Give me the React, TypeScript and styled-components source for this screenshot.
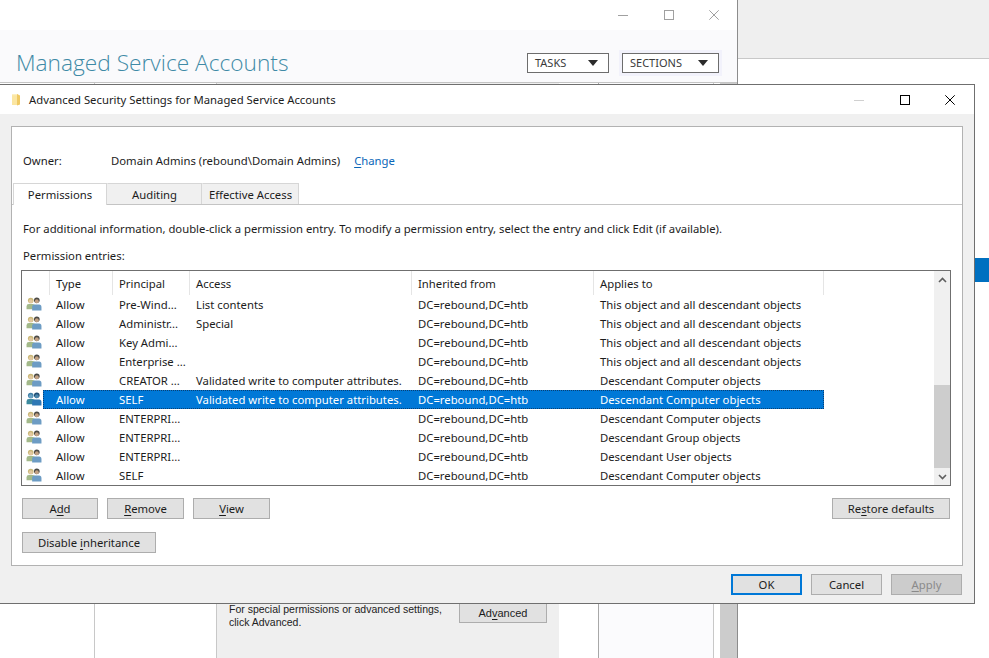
import React from 'react';
import styled, { createGlobalStyle } from 'styled-components';

const UI_FONT = '"Noto Sans", "Open Sans", "Liberation Sans", sans-serif';

const GlobalStyle = createGlobalStyle`
  html, body {
    margin: 0;
    padding: 0;
    background: #ffffff;
  }
  body {
    font-family: ${UI_FONT};
    font-size: 11.3px;
    color: #1c1c1c;
  }
`;

const Desktop = styled.div`
  position: relative;
  width: 989px;
  height: 658px;
  overflow: hidden;
  background: #ffffff;
`;

/* window behind the dialog */
const BackWindow = styled.div`
  position: absolute;
  left: 0;
  top: 0;
  width: 737px;
  height: 658px;
  display: flex;
  flex-direction: column;
  border-right: 1px solid #8c8c8c;
  background: #ffffff;
`;

const BackTitleBar = styled.div`
  height: 30px;
  flex: none;
  box-sizing: border-box;
  padding-bottom: 1px;
  display: flex;
  align-items: center;
  justify-content: flex-end;
`;

const CaptionButton = styled.div`
  width: 45.5px;
  height: 29px;
  display: flex;
  align-items: center;
  justify-content: center;
`;

const BackCaptions = styled.div`
  display: flex;
`;

const BackHeader = styled.div`
  height: 53px;
  flex: none;
  box-sizing: border-box;
  display: flex;
  align-items: center;
  padding: 13px 18px 0 16px;
  background: #fafafc;
  border-bottom: 1px solid #c4c4c4;
`;

const PageTitle = styled.h1`
  margin: 0;
  flex: 1;
  font-family: "Open Sans", sans-serif;
  font-weight: 300;
  font-size: 22.7px;
  color: #3f8aa6;
`;

const MenuButton = styled.div<{ $width: number; $halo?: boolean }>`
  width: ${(p) => p.$width}px;
  height: 20px;
  box-sizing: border-box;
  margin-left: 13px;
  display: flex;
  align-items: center;
  justify-content: space-between;
  padding: 0 10px 0 7px;
  border: 1px solid #6d6d6d;
  background: #ffffff;
  font-size: 11px;
  color: #3a3a3a;
  box-shadow: ${(p) => (p.$halo ? '0 0 0 3px #f2f2fb' : 'none')};
`;

const MenuCaret = styled.span`
  width: 0;
  height: 0;
  border-left: 5px solid transparent;
  border-right: 5px solid transparent;
  border-top: 6px solid #2b2b2b;
`;

const BackColumns = styled.div`
  flex: 1;
  display: flex;
`;

const BackColumn = styled.div<{ $width: number; $tint?: boolean }>`
  width: ${(p) => p.$width}px;
  box-sizing: border-box;
  flex: none;
  background: ${(p) => (p.$tint ? '#fbfbfd' : '#ffffff')};
  border-right: 1px solid #c8c8c8;
`;

const BackGap = styled.div<{ $width: number }>`
  width: ${(p) => p.$width}px;
  flex: none;
`;

const GreyPanel = styled.div`
  width: 342px;
  flex: none;
  box-sizing: border-box;
  display: flex;
  align-items: flex-end;
  padding: 0 0 30px 12px;
  background: #efefef;
`;

const PanelNote = styled.div`
  width: 230px;
  flex: none;
  margin-bottom: -1px;
  font-family: "Liberation Sans", Arial, sans-serif;
  font-size: 10.5px;
  line-height: 13px;
  color: #222222;
`;

const BackColumnLeft = styled(BackColumn)`
  border-left: 1px solid #a8a8a8;
`;

const BackScroll = styled.div`
  width: 17px;
  flex: none;
  background: #cccccc;
`;

/* window on the right, mostly cut off */
const SideWindow = styled.div`
  position: absolute;
  left: 738px;
  top: 0;
  right: 0;
  bottom: 0;
`;

const SideBar = styled.div`
  height: 59px;
  box-sizing: border-box;
  background: #efefef;
  border-bottom: 1px solid #c8c8c8;
`;

const SideMarker = styled.div`
  position: absolute;
  left: 236px;
  top: 258px;
  right: 0;
  height: 24px;
  background: #0070c0;
`;

/* the dialog */
const Dialog = styled.div`
  position: absolute;
  left: -1px;
  top: 84px;
  width: 976px;
  height: 520px;
  box-sizing: border-box;
  display: flex;
  flex-direction: column;
  border: 1px solid #6f6f6f;
  background: #f0f0f0;
`;

const DialogTitleBar = styled.div`
  height: 29px;
  flex: none;
  display: flex;
  align-items: center;
  padding: 0 1px 0 11px;
  background: #ffffff;
`;

const DialogTitle = styled.span`
  flex: 1;
  margin-left: 8px;
  color: #1c1c1c;
`;

const DialogBody = styled.div`
  flex: 1;
  display: flex;
  flex-direction: column;
  padding: 12px 11px 8px 11px;
  min-height: 0;
`;

const MainPanel = styled.div`
  height: 440px;
  flex: none;
  box-sizing: border-box;
  display: flex;
  flex-direction: column;
  background: #ffffff;
  border: 1px solid #b2b2b2;
`;

const OwnerRow = styled.div`
  height: 56px;
  flex: none;
  box-sizing: border-box;
  display: flex;
  align-items: center;
  padding: 10px 0 0 11px;
`;

const OwnerLabel = styled.span`
  width: 88px;
`;

const OwnerValue = styled.span`
  margin-right: 14px;
`;

const ChangeLink = styled.a`
  color: #0a66b8;
  text-decoration: none;
`;

const Key = styled.span`
  text-decoration: underline;
  text-underline-offset: 2px;
`;

const TabStrip = styled.div`
  height: 22px;
  flex: none;
  box-sizing: border-box;
  display: flex;
  align-items: flex-end;
  border-bottom: 1px solid #c4c4c4;
  padding-left: 1px;
`;

const Tab = styled.div<{ $width: number; $active?: boolean }>`
  width: ${(p) => p.$width}px;
  height: ${(p) => (p.$active ? 22 : 21)}px;
  box-sizing: border-box;
  display: flex;
  align-items: center;
  justify-content: center;
  border: 1px solid #d6d6d6;
  border-bottom: none;
  border-left-color: ${(p) => (p.$active ? '#d6d6d6' : 'transparent')};
  background: ${(p) => (p.$active ? '#ffffff' : '#f0f0f0')};
  margin-bottom: ${(p) => (p.$active ? -1 : 0)}px;
  position: relative;
`;

const TabBody = styled.div`
  flex: 1;
  display: flex;
  flex-direction: column;
  padding: 0 12px 11px 10px;
  min-height: 0;
`;

const InfoLine = styled.div`
  margin-top: 15px;
  padding-left: 1px;
  height: 17px;
  line-height: 17px;
`;

const EntriesLabel = styled.div`
  margin-top: 10px;
  padding-left: 1px;
  height: 17px;
  line-height: 17px;
`;

const EntriesBox = styled.div`
  margin: 6px 0 0 -1px;
  height: 216px;
  width: 930px;
  flex: none;
  box-sizing: border-box;
  display: flex;
  border: 1px solid #6f6f6f;
  background: #ffffff;
`;

const EntriesList = styled.div`
  flex: 1;
  min-width: 0;
  overflow: hidden;
`;

const HeaderRow = styled.div`
  height: 24px;
  display: grid;
  grid-template-columns: 28px 63px 77px 222px 182px 230px;
`;

const HeaderCell = styled.div`
  box-sizing: border-box;
  display: flex;
  align-items: center;
  padding-left: 6px;
  border-right: 1px solid #e5e5e5;
`;

const Row = styled.div`
  height: 19px;
  display: flex;
  align-items: center;
`;

const RowIcon = styled.div`
  width: 21px;
  flex: none;
  display: flex;
  padding: 0 0 2px 4px;
  box-sizing: border-box;
`;

const RowBody = styled.div<{ $selected?: boolean }>`
  width: 781px;
  height: 19px;
  flex: none;
  display: grid;
  grid-template-columns: 70px 77px 222px 182px 230px;
  align-items: center;
  box-sizing: border-box;
  background: ${(p) => (p.$selected ? '#0078d7' : 'transparent')};
  color: ${(p) => (p.$selected ? '#ffffff' : 'inherit')};
  outline: ${(p) => (p.$selected ? '1px dotted #0a3f72' : 'none')};
  outline-offset: -1px;
`;

const RowCell = styled.div`
  padding-left: 6px;
  white-space: nowrap;
  &:first-child {
    padding-left: 13px;
  }
`;

const ScrollTrack = styled.div`
  width: 16px;
  flex: none;
  display: flex;
  flex-direction: column;
  background: #f0f0f0;
`;

const ScrollArrow = styled.div`
  height: 17px;
  flex: none;
  display: flex;
  align-items: center;
  justify-content: center;
`;

const ScrollSpace = styled.div`
  flex: 1;
  display: flex;
  flex-direction: column;
  justify-content: flex-end;
`;

const ScrollThumb = styled.div`
  height: 83px;
  background: #cdcdcd;
`;

const ActionRow = styled.div<{ $top: number }>`
  display: flex;
  margin-top: ${(p) => p.$top}px;
  gap: 9px;
  width: 928px;
`;

const Spacer = styled.div`
  flex: 1;
`;

const Button = styled.div<{ $width: number; $variant?: 'default' | 'disabled' }>`
  width: ${(p) => p.$width}px;
  height: 21px;
  flex: none;
  box-sizing: border-box;
  display: flex;
  align-items: center;
  justify-content: center;
  white-space: pre;
  border: ${(p) => (p.$variant === 'default' ? '2px solid #0078d7' : '1px solid #adadad')};
  background: ${(p) => (p.$variant === 'disabled' ? '#cccccc' : '#e1e1e1')};
  color: ${(p) => (p.$variant === 'disabled' ? '#8a8a8a' : '#1c1c1c')};
`;

const BackButton = styled(Button)`
  font-family: "Liberation Sans", Arial, sans-serif;
  font-size: 11px;
  margin-bottom: 5px;
`;

const DialogFooter = styled.div`
  display: flex;
  justify-content: flex-end;
  gap: 9px;
  padding-top: 8px;
  padding-right: 1px;
`;

function WindowGlyph ({ kind, color }: { kind: 'min' | 'max' | 'close'; color: string }): React.ReactElement {
  return (
    <svg width='10' height='10' viewBox='0 0 10 10' fill='none' stroke={color} strokeWidth='1'>
      {kind === 'min' && <path d='M0 5.5H10' />}
      {kind === 'max' && <rect x='0.5' y='0.5' width='9' height='9' />}
      {kind === 'close' && <path d='M0.3 0.3L9.7 9.7M9.7 0.3L0.3 9.7' />}
    </svg>
  );
}

function FolderIcon (): React.ReactElement {
  return (
    <svg width='10' height='13' viewBox='0 0 10 13'>
      <path d='M1 1h5l2 1.5V12H1z' fill='#fbe6a2' />
      <path d='M6 1l3 1.5V11.5L6 12.5z' fill='#efc964' />
      <path d='M1 1h5v1.2H1z' fill='#fdf0c4' />
    </svg>
  );
}

function UsersIcon ({ selected }: { selected?: boolean }): React.ReactElement {
  const hairLeft = selected ? '#3f7fa6' : '#c9b878';
  const faceLeft = selected ? '#6ba3c4' : '#e3c9a0';
  const bodyLeft = selected ? '#3c8a9e' : '#a3b98a';
  const hairRight = selected ? '#1f4d73' : '#4b4a46';
  const faceRight = selected ? '#4a86ad' : '#c2a183';
  const bodyRight = selected ? '#2f78b4' : '#6d9cc4';

  return (
    <svg width='16' height='14' viewBox='0 0 17 15'>
      <circle cx='5' cy='3.8' r='3' fill={hairLeft} />
      <circle cx='5' cy='4.5' r='2.1' fill={faceLeft} />
      <path d='M0.5 13V10.2Q0.5 7.6 3 7.6H7Q9.5 7.6 9.5 10.2V13z' fill={bodyLeft} />
      <circle cx='11.5' cy='3.6' r='3' fill={hairRight} />
      <circle cx='11.5' cy='4.6' r='2.1' fill={faceRight} />
      <path d='M6.5 14.5V10.8Q6.5 8 9 8H14Q16.5 8 16.5 10.8V14.5z' fill={bodyRight} />
    </svg>
  );
}

function ScrollChevron ({ down }: { down?: boolean }): React.ReactElement {
  return (
    <svg width='9' height='6' viewBox='0 0 9 6' fill='none' stroke='#5f5f5f' strokeWidth='1.6'>
      <path d={down ? 'M1 1l3.5 3.5L8 1' : 'M1 5l3.5-3.5L8 5'} />
    </svg>
  );
}

interface Entry {
  principal: string;
  access: string;
  applies: string;
  selected?: boolean;
}

const ALL_OBJECTS = 'This object and all descendant objects';
const COMPUTERS = 'Descendant Computer objects';
const VALIDATED = 'Validated write to computer attributes.';

const ENTRIES: Entry[] = [
  { access: 'List contents', applies: ALL_OBJECTS, principal: 'Pre-Wind...' },
  { access: 'Special', applies: ALL_OBJECTS, principal: 'Administr...' },
  { access: '', applies: ALL_OBJECTS, principal: 'Key Admi...' },
  { access: '', applies: ALL_OBJECTS, principal: 'Enterprise ...' },
  { access: VALIDATED, applies: COMPUTERS, principal: 'CREATOR ...' },
  { access: VALIDATED, applies: COMPUTERS, principal: 'SELF', selected: true },
  { access: '', applies: COMPUTERS, principal: 'ENTERPRI...' },
  { access: '', applies: 'Descendant Group objects', principal: 'ENTERPRI...' },
  { access: '', applies: 'Descendant User objects', principal: 'ENTERPRI...' },
  { access: '', applies: COMPUTERS, principal: 'SELF' }
];

const COLUMNS = ['', 'Type', 'Principal', 'Access', 'Inherited from', 'Applies to'];

export default function App (): React.ReactElement {
  return (
    <Desktop>
      <GlobalStyle />
      <SideWindow>
        <SideBar />
        <SideMarker />
      </SideWindow>
      <BackWindow>
        <BackTitleBar>
          <BackCaptions>
            <CaptionButton><WindowGlyph color='#a0a0a0' kind='min' /></CaptionButton>
            <CaptionButton><WindowGlyph color='#a0a0a0' kind='max' /></CaptionButton>
            <CaptionButton><WindowGlyph color='#a0a0a0' kind='close' /></CaptionButton>
          </BackCaptions>
        </BackTitleBar>
        <BackHeader>
          <PageTitle>Managed Service Accounts</PageTitle>
          <MenuButton $width={82}>TASKS<MenuCaret /></MenuButton>
          <MenuButton $halo $width={97}>SECTIONS<MenuCaret /></MenuButton>
        </BackHeader>
        <BackColumns>
          <BackColumn $width={95} />
          <BackGap $width={6} />
          <BackColumn $width={116} />
          <GreyPanel>
            <PanelNote>For special permissions or advanced settings,<br />click Advanced.</PanelNote>
            <BackButton $width={88}>Ad<Key>v</Key>anced</BackButton>
          </GreyPanel>
          <BackGap $width={39} />
          <BackColumnLeft $tint $width={116} />
          <BackGap $width={6} />
          <BackScroll />
        </BackColumns>
      </BackWindow>
      <Dialog>
        <DialogTitleBar>
          <FolderIcon />
          <DialogTitle>Advanced Security Settings for Managed Service Accounts</DialogTitle>
          <CaptionButton><WindowGlyph color='#d0d0d0' kind='min' /></CaptionButton>
          <CaptionButton><WindowGlyph color='#000000' kind='max' /></CaptionButton>
          <CaptionButton><WindowGlyph color='#000000' kind='close' /></CaptionButton>
        </DialogTitleBar>
        <DialogBody>
          <MainPanel>
            <OwnerRow>
              <OwnerLabel>Owner:</OwnerLabel>
              <OwnerValue>Domain Admins (rebound\Domain Admins)</OwnerValue>
              <ChangeLink><Key>C</Key>hange</ChangeLink>
            </OwnerRow>
            <TabStrip>
              <Tab $active $width={94}>Permissions</Tab>
              <Tab $width={95}>Auditing</Tab>
              <Tab $width={97}>Effective Access</Tab>
            </TabStrip>
            <TabBody>
              <InfoLine>For additional information, double-click a permission entry. To modify a permission entry, select the entry and click Edit (if available).</InfoLine>
              <EntriesLabel>Permission entries:</EntriesLabel>
              <EntriesBox>
                <EntriesList>
                  <HeaderRow>
                    {COLUMNS.map((column, index) => <HeaderCell key={index}>{column}</HeaderCell>)}
                  </HeaderRow>
                  {ENTRIES.map((entry, index) => (
                    <Row key={index}>
                      <RowIcon><UsersIcon selected={entry.selected} /></RowIcon>
                      <RowBody $selected={entry.selected}>
                        <RowCell>Allow</RowCell>
                        <RowCell>{entry.principal}</RowCell>
                        <RowCell>{entry.access}</RowCell>
                        <RowCell>DC=rebound,DC=htb</RowCell>
                        <RowCell>{entry.applies}</RowCell>
                      </RowBody>
                    </Row>
                  ))}
                </EntriesList>
                <ScrollTrack>
                  <ScrollArrow><ScrollChevron /></ScrollArrow>
                  <ScrollSpace><ScrollThumb /></ScrollSpace>
                  <ScrollArrow><ScrollChevron down /></ScrollArrow>
                </ScrollTrack>
              </EntriesBox>
              <ActionRow $top={12}>
                <Button $width={76}>A<Key>d</Key>d</Button>
                <Button $width={77}><Key>R</Key>emove</Button>
                <Button $width={77}><Key>V</Key>iew</Button>
                <Spacer />
                <Button $width={118}>Re<Key>s</Key>tore defaults</Button>
              </ActionRow>
              <ActionRow $top={13}>
                <Button $width={134}>Disable <Key>i</Key>nheritance</Button>
              </ActionRow>
            </TabBody>
          </MainPanel>
          <DialogFooter>
            <Button $variant='default' $width={71}>OK</Button>
            <Button $width={71}>Cancel</Button>
            <Button $variant='disabled' $width={71}><Key>A</Key>pply</Button>
          </DialogFooter>
        </DialogBody>
      </Dialog>
    </Desktop>
  );
}
